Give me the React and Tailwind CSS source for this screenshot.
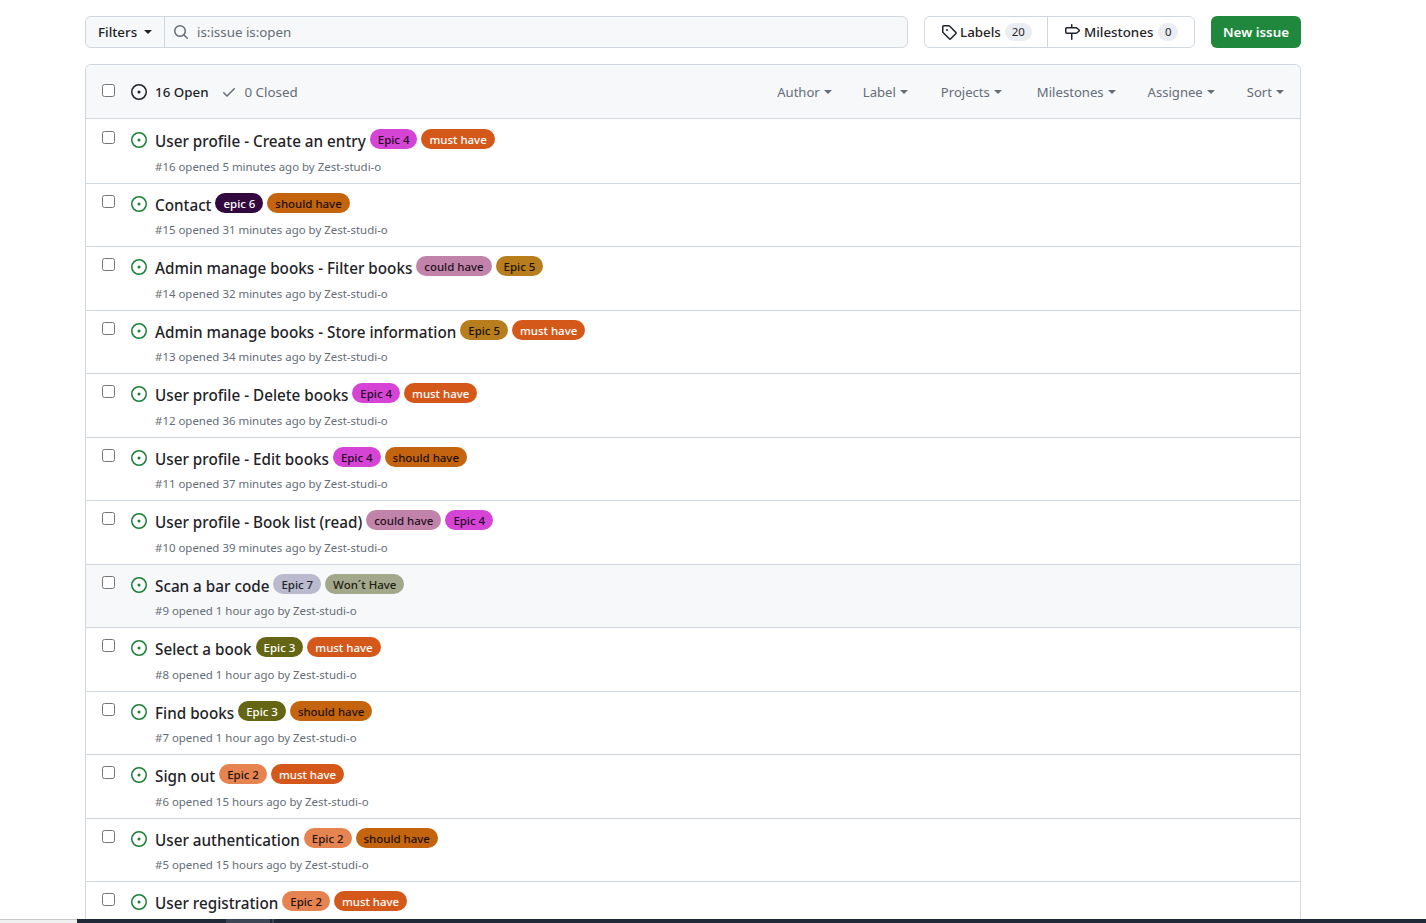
const LABELS = {
  epic2: ['Epic 2', 'bg-[#e58451] text-[#1f1109]'],
  epic3: ['Epic 3', 'bg-[#646613] text-white'],
  epic4: ['Epic 4', 'bg-[#d644d6] text-[#1f0a1f]'],
  epic5: ['Epic 5', 'bg-[#b87d1c] text-[#1a1205]'],
  epic6: ['epic 6', 'bg-[#32083f] text-white'],
  epic7: ['Epic 7', 'bg-[#b9bace] text-[#1f2328]'],
  must: ['must have', 'bg-[#d4581a] text-white'],
  should: ['should have', 'bg-[#c4640f] text-[#1f1005]'],
  could: ['could have', 'bg-[#c283ab] text-[#1f1119]'],
  wont: ['Won´t Have', 'bg-[#a3a88c] text-[#1f2010]'],
};

const ISSUES = [
  { title: 'User profile - Create an entry', labels: ['epic4', 'must'], meta: '#16 opened 5 minutes ago by Zest-studi-o', first: true },
  { title: 'Contact', labels: ['epic6', 'should'], meta: '#15 opened 31 minutes ago by Zest-studi-o' },
  { title: 'Admin manage books - Filter books', labels: ['could', 'epic5'], meta: '#14 opened 32 minutes ago by Zest-studi-o' },
  { title: 'Admin manage books - Store information', labels: ['epic5', 'must'], meta: '#13 opened 34 minutes ago by Zest-studi-o' },
  { title: 'User profile - Delete books', labels: ['epic4', 'must'], meta: '#12 opened 36 minutes ago by Zest-studi-o' },
  { title: 'User profile - Edit books', labels: ['epic4', 'should'], meta: '#11 opened 37 minutes ago by Zest-studi-o' },
  { title: 'User profile - Book list (read)', labels: ['could', 'epic4'], meta: '#10 opened 39 minutes ago by Zest-studi-o' },
  { title: 'Scan a bar code', labels: ['epic7', 'wont'], meta: '#9 opened 1 hour ago by Zest-studi-o', hover: true },
  { title: 'Select a book', labels: ['epic3', 'must'], meta: '#8 opened 1 hour ago by Zest-studi-o' },
  { title: 'Find books', labels: ['epic3', 'should'], meta: '#7 opened 1 hour ago by Zest-studi-o' },
  { title: 'Sign out', labels: ['epic2', 'must'], meta: '#6 opened 15 hours ago by Zest-studi-o' },
  { title: 'User authentication', labels: ['epic2', 'should'], meta: '#5 opened 15 hours ago by Zest-studi-o' },
  { title: 'User registration', labels: ['epic2', 'must'] },
];

const FILTERS = [
  ['Author', 'ml-0'],
  ['Label', 'ml-[31px]'],
  ['Projects', 'ml-[33px]'],
  ['Milestones', 'ml-[35px]'],
  ['Assignee', 'ml-[32px]'],
  ['Sort', 'ml-[32px]'],
];

function Caret({ className }) {
  return <span className={`inline-block w-0 h-0 border-x-[4px] border-x-transparent border-t-[4px] border-t-current ${className}`} />;
}

function IssueIcon({ className }) {
  return (
    <svg viewBox="0 0 16 16" width="16" height="16" fill="currentColor" className={`shrink-0 ${className}`}>
      <path d="M8 9.5a1.5 1.5 0 1 0 0-3 1.5 1.5 0 0 0 0 3Z" />
      <path d="M8 0a8 8 0 1 1 0 16A8 8 0 0 1 8 0ZM1.5 8a6.5 6.5 0 1 0 13 0 6.5 6.5 0 0 0-13 0Z" />
    </svg>
  );
}

function Checkbox({ className }) {
  return <span className={`block w-[13px] h-[13px] rounded-[2.5px] border border-[#767676] bg-white shrink-0 ${className}`} />;
}

function Label({ id }) {
  const [text, cls] = LABELS[id];
  return <span className={`inline-block h-5 leading-[22px] px-2 rounded-full text-[11.45px] font-medium whitespace-nowrap ${cls}`}>{text}</span>;
}

function IssueRow({ issue }) {
  const { first } = issue;
  return (
    <div className={`flex border-t border-[#d0d7de] ${first ? 'h-[64.75px]' : 'h-[63.5px]'} ${issue.hover ? 'bg-[#f6f8fa]' : 'bg-white'}`}>
      <Checkbox className={`ml-[16px] ${first ? 'mt-[12px]' : 'mt-[11px]'}`} />
      <IssueIcon className={`ml-[16px] text-[#1a7f37] ${first ? 'mt-[13px]' : 'mt-[12px]'}`} />
      <div className="ml-[8px] min-w-0">
        <div className={`flex items-start gap-1 h-[26px] ${first ? 'mt-[11px]' : 'mt-[10px]'}`}>
          <span className="text-[15.25px] font-medium leading-[22px] text-[#1f2328] whitespace-nowrap">{issue.title}</span>
          <span className="flex gap-1 -mt-[1px]">
            {issue.labels.map(l => <Label key={l} id={l} />)}
          </span>
        </div>
        {issue.meta && <div className={`text-[11.45px] leading-[18px] text-[#656d76] whitespace-nowrap ${first ? 'mt-[2px]' : 'mt-[1.25px]'}`}>{issue.meta}</div>}
      </div>
    </div>
  );
}

export default function App() {
  return (
    <div className="flex flex-col h-[923px] overflow-hidden bg-white font-['Noto_Sans','Open_Sans',sans-serif] text-[#1f2328]">
      <div className="flex-1 min-h-0 overflow-hidden">
        <div className="w-[1216px] ml-[85px] pt-[16px]">
          <div className="flex h-8 text-[13.35px]">
            <div className="flex flex-1 rounded-md border border-[#d0d7de] bg-[#f6f8fa]">
              <div className="flex items-center w-[79px] pl-3 border-r border-[#d0d7de] font-medium">
                Filters
                <Caret className="ml-[7px]" />
              </div>
              <div className="flex items-center pl-2 text-[#656d76]">
                <svg viewBox="0 0 16 16" width="16" height="16" fill="currentColor">
                  <path d="M10.68 11.74a6 6 0 0 1-7.922-8.982 6 6 0 0 1 8.982 7.922l3.04 3.04a.749.749 0 0 1-.326 1.275.749.749 0 0 1-.734-.215ZM11.5 7a4.499 4.499 0 1 0-8.997 0A4.499 4.499 0 0 0 11.5 7Z" />
                </svg>
                <span className="ml-2">is:issue is:open</span>
              </div>
            </div>
            <div className="flex ml-4 w-[271px] rounded-md border border-[#d0d7de] bg-white font-medium">
              <div className="flex items-center w-[123px] pl-4 border-r border-[#d0d7de]">
                <svg viewBox="0 0 16 16" width="16" height="16" fill="currentColor" className="text-[#1f2328]">
                  <path d="M1 7.775V2.75C1 1.784 1.784 1 2.75 1h5.025c.464 0 .91.184 1.238.513l6.25 6.25a1.75 1.75 0 0 1 0 2.474l-5.026 5.026a1.75 1.75 0 0 1-2.474 0l-6.25-6.25A1.752 1.752 0 0 1 1 7.775Zm1.5 0c0 .066.026.13.073.177l6.25 6.25a.25.25 0 0 0 .354 0l5.025-5.025a.25.25 0 0 0 0-.354l-6.25-6.25a.25.25 0 0 0-.177-.073H2.75a.25.25 0 0 0-.25.25ZM6 5a1 1 0 1 1 0 2 1 1 0 0 1 0-2Z" />
                </svg>
                <span className="ml-[3px]">Labels</span>
                <span className="ml-[4px] w-[27px] h-[18px] leading-[18px] rounded-full bg-[#eaeef2] text-[11.45px] text-center font-normal">20</span>
              </div>
              <div className="flex items-center pl-4">
                <svg viewBox="0 0 16 16" width="16" height="16" fill="currentColor">
                  <path d="M7.75 0a.75.75 0 0 1 .75.75V3h3.634c.414 0 .814.147 1.13.414l2.07 1.75a1.75 1.75 0 0 1 0 2.672l-2.07 1.75a1.75 1.75 0 0 1-1.13.414H8.5v5.25a.75.75 0 0 1-1.5 0V10H2.75A1.75 1.75 0 0 1 1 8.25v-3.5C1 3.784 1.784 3 2.75 3H7V.75A.75.75 0 0 1 7.75 0Zm4.384 8.5a.25.25 0 0 0 .161-.06l2.07-1.75a.248.248 0 0 0 0-.38l-2.07-1.75a.25.25 0 0 0-.161-.06H2.75a.25.25 0 0 0-.25.25v3.5c0 .138.112.25.25.25h9.384Z" />
                </svg>
                <span className="ml-[4px]">Milestones</span>
                <span className="ml-[5px] w-[20px] h-[18px] leading-[18px] rounded-full bg-[#eaeef2] text-[11.45px] text-center font-normal">0</span>
              </div>
            </div>
            <button className="ml-4 w-[90px] rounded-md bg-[#1f883d] text-white font-semibold">New issue</button>
          </div>

          <div className="mt-[16px] rounded-t-md border-x border-t border-[#d0d7de]">
            <div className="flex items-center h-[53px] bg-[#f6f8fa] rounded-t-md">
              <Checkbox className="ml-[16px] -mt-[2px]" />
              <IssueIcon className="ml-[16px] text-[#1f2328]" />
              <span className="ml-[8px] mt-[2px] text-[13.35px] font-medium">16 Open</span>
              <svg viewBox="0 0 16 16" width="16" height="16" fill="currentColor" className="ml-[12px] text-[#656d76]">
                <path d="M13.78 4.22a.75.75 0 0 1 0 1.06l-7.25 7.25a.75.75 0 0 1-1.06 0L2.22 9.28a.751.751 0 0 1 .018-1.042.751.751 0 0 1 1.042-.018L6 10.94l6.72-6.72a.75.75 0 0 1 1.06 0Z" />
              </svg>
              <span className="ml-[8px] mt-[2px] text-[13.35px] text-[#656d76]">0 Closed</span>
              <div className="flex items-center ml-auto mr-[16px] mt-[2px] text-[13.1px] text-[#656d76]">
                {FILTERS.map(([name, ml]) => (
                  <span key={name} className={`flex items-center ${ml}`}>
                    {name}
                    <Caret className="ml-[4px]" />
                  </span>
                ))}
              </div>
            </div>
            {ISSUES.map(i => <IssueRow key={i.title} issue={i} />)}
          </div>
        </div>
      </div>
      {/* cut-off OS taskbar at the bottom edge */}
      <div className="flex h-1 shrink-0 bg-[#1f2937]">
        <div className="w-[77px] bg-[#f0f0f0] border-t border-[#c8c8c8]" />
        <div className="ml-[149px] w-[44px] bg-[#3d4654]" />
        <div className="ml-[2px] w-[2px] bg-[#3d4654]" />
      </div>
    </div>
  );
}
